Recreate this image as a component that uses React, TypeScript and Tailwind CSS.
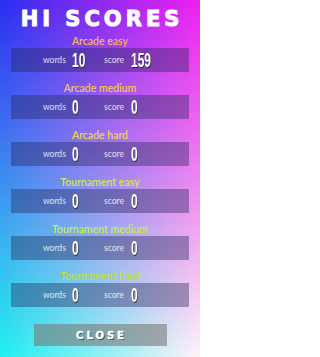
import React from 'react';

interface ScoreRow {
  label: string;
  color: string;
  words: number;
  score: number;
}

const rows: ScoreRow[] = [
  { label: 'Arcade easy', color: 'text-[#f5b85a]', words: 10, score: 159 },
  { label: 'Arcade medium', color: 'text-[#f5c848]', words: 0, score: 0 },
  { label: 'Arcade hard', color: 'text-[#ecd84c]', words: 0, score: 0 },
  { label: 'Tournament easy', color: 'text-[#cfe84a]', words: 0, score: 0 },
  { label: 'Tournament medium', color: 'text-[#c8f038]', words: 0, score: 0 },
  { label: 'Tournament hard', color: 'text-[#bfe02c]', words: 0, score: 0 },
];

function Digits({ value }: { value: number }) {
  return (
    <span className="inline-block origin-left scale-x-[0.6] font-['Liberation_Sans',sans-serif] text-[20px] font-bold leading-[24px] text-white [text-shadow:1px_1px_0_#2a2a3a]">
      {value}
    </span>
  );
}

function Section({ row }: { row: ScoreRow }) {
  return (
    <div className="flex w-full flex-col items-center">
      <div className={`h-[14px] text-[10.5px] font-semibold leading-[14px] ${row.color}`}>{row.label}</div>
      <div className="flex h-[24px] w-[178px] items-center bg-[#26265a]/40 pl-[32px]">
        <span className="w-[29px] text-[8.5px] text-white/80">words</span>
        <span className="w-[32px]">
          <Digits value={row.words} />
        </span>
        <span className="w-[27px] text-[8.5px] text-white/80">score</span>
        <span>
          <Digits value={row.score} />
        </span>
      </div>
    </div>
  );
}

export default function App() {
  return (
    <div className="relative h-[357px] w-[200px] overflow-hidden bg-[linear-gradient(to_bottom,#2a2ef0_0%,#3c78f0_40%,#36b8f0_70%,#20f0f0_100%)] font-['Lato',sans-serif]">
      {/* right-hand colour wash */}
      <div className="pointer-events-none absolute inset-0 bg-[linear-gradient(to_bottom,#f020f0_0%,#f070f0_40%,#f6b0f0_70%,#fff2f8_100%)] [mask-image:linear-gradient(to_right,transparent_0%,black_100%)]" />

      <div className="relative flex flex-col items-center pt-[7px]">
        <h1 className="mb-[3px] pl-[4px] font-['DejaVu_Sans',sans-serif] text-[21px] font-bold leading-[24px] tracking-[4px] text-white [-webkit-text-stroke:1px_white]">
          HI SCORES
        </h1>
        <div className="flex w-full flex-col gap-[9px]">
          {rows.map((row) => (
            <Section key={row.label} row={row} />
          ))}
        </div>
        <button className="mt-[17px] flex h-[22px] w-[133px] items-center justify-center bg-[#787a78]/60 pl-[3px] font-['DejaVu_Sans',sans-serif] text-[10px] font-bold tracking-[3px] text-white [-webkit-text-stroke:0.5px_white] [text-shadow:1px_1px_0_#3a3a3a]">
          CLOSE
        </button>
      </div>
    </div>
  );
}
